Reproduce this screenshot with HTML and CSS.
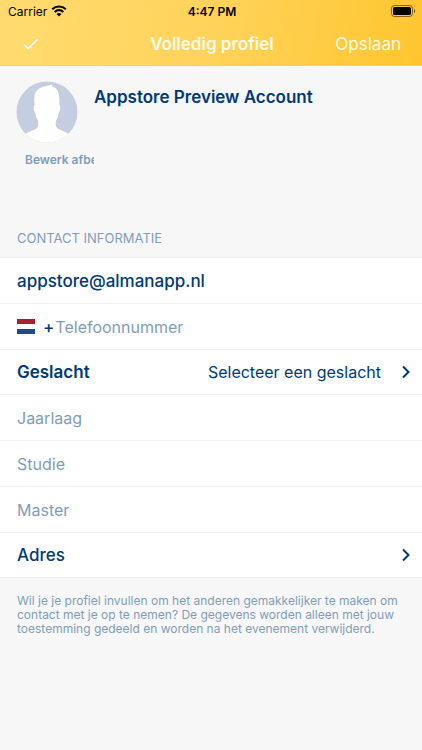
FILE: index.html
```html
<!DOCTYPE html>
<html lang="nl">
<head>
<meta charset="utf-8">
<meta name="viewport" content="width=device-width, initial-scale=1">
<title>Volledig profiel</title>
<link rel="stylesheet" href="styles.css">
</head>
<body>
<header class="top">
  <div class="status">
    <div class="carrier">
      <span>Carrier</span>
      <svg class="wifi" viewBox="0 0 16 12" aria-hidden="true"><path d="M1.2 4.3a9.8 9.8 0 0 1 13.6 0M3.7 6.9a6.2 6.2 0 0 1 8.6 0" fill="none" stroke="#000" stroke-width="2.1"/><path d="M8 11.6 5.5 9.1a3.6 3.6 0 0 1 5 0z"/></svg>
    </div>
    <time class="clock">4:47 PM</time>
    <svg class="battery" viewBox="0 0 25 12" aria-hidden="true"><rect x=".5" y=".5" width="21" height="11" rx="3" fill="none" stroke="#000" stroke-opacity=".5"/><rect x="2" y="2" width="18" height="8" rx="1.6"/><path d="M23 4v4c1.600-.6 1.600-3.400 0-4z" opacity=".6"/></svg>
  </div>
  <nav class="bar">
    <button class="confirm" type="button" aria-label="Bevestigen">
      <svg viewBox="0 0 16 12" aria-hidden="true"><path d="M1 6.600 5.200 10.600 14.800 1.200" fill="none" stroke="#fff" stroke-width="1.700"/></svg>
    </button>
    <h1>Volledig profiel</h1>
    <button class="save" type="submit" form="profile">Opslaan</button>
  </nav>
</header>
<main>
  <section class="person">
    <div class="photo">
      <svg class="avatar" viewBox="0 0 62 62" aria-hidden="true">
        <defs><clipPath id="disc"><circle cx="31" cy="31" r="30.500"/></clipPath></defs>
        <g clip-path="url(#disc)">
          <rect width="62" height="62" fill="#c6cde0"/>
          <path d="M9 53C15 49 21 49 22 45C22.400 43 22.300 41 22 39.500C20.500 37.500 19.800 35 19.400 32C18 31 17.300 27 18 24.500L18.700 24C18 17 18 11 22.500 8C26.500 5 32 5 36 3.400C35.600 4.600 36 5.300 37 5.800C42.500 8 44 14 43.300 24L44 24.500C44.700 27 44 31 42.600 32C42.200 35 41.500 37.500 40 39.500C39.700 41 39.600 43 40 45C41 49 47 49 53 53L62 62H0Z" fill="#fff"/>
        </g>
      </svg>
      <button class="edit" type="button">Bewerk afbeelding</button>
    </div>
    <h2>Appstore Preview Account</h2>
  </section>
  <form id="profile">
    <h3>CONTACT INFORMATIE</h3>
    <div class="rows">
      <div class="row"><input class="email" type="email" value="appstore@almanapp.nl" aria-label="E-mail"></div>
      <div class="row">
        <svg class="flag" viewBox="0 0 18 15" aria-hidden="true"><rect width="18" height="15" fill="#fff"/><rect width="18" height="5" fill="#a9202f"/><rect y="10" width="18" height="5" fill="#24468e"/></svg>
        <label class="plus" for="phone">+</label>
        <input id="phone" type="tel" placeholder="Telefoonnummer">
      </div>
      <button class="row link" type="button">
        <span class="name strong">Geslacht</span>
        <span class="choice">Selecteer een geslacht</span>
        <svg class="chevron" viewBox="0 0 8 14" aria-hidden="true"><path d="M1 1.500 6.500 7 1 12.500" fill="none" stroke="#003a75" stroke-width="2"/></svg>
      </button>
      <div class="row"><input type="text" placeholder="Jaarlaag" aria-label="Jaarlaag"></div>
      <div class="row"><input type="text" placeholder="Studie" aria-label="Studie"></div>
      <div class="row"><input type="text" placeholder="Master" aria-label="Master"></div>
      <button class="row link" type="button">
        <span class="name">Adres</span>
        <svg class="chevron" viewBox="0 0 8 14" aria-hidden="true"><path d="M1 1.500 6.500 7 1 12.500" fill="none" stroke="#003a75" stroke-width="2"/></svg>
      </button>
    </div>
    <p class="note">Wil je je profiel invullen om het anderen gemakkelijker te maken om contact met je op te nemen? De gegevens worden alleen met jouw toestemming gedeeld en worden na het evenement verwijderd.</p>
  </form>
</main>
</body>
</html>
```
FILE: styles.css
```css
* { box-sizing: border-box; }
body {
  margin: 0;
  min-height: 100vh;
  background: #f7f7f7;
  color: #003a75;
  font-family: Inter, "Liberation Sans", sans-serif;
  font-size: 17px;
}
h1, h2, h3, p { margin: 0; }
button, input {
  margin: 0;
  padding: 0;
  border: 0;
  background: none;
  color: inherit;
  font: inherit;
}
svg { display: block; flex: none; }
.top {
  height: 66px;
  background: linear-gradient(100deg, #ffdb70, #ffd35a 50%, #fec52e);
  border-bottom: 1px solid #e3cf98;
}
.status {
  display: grid;
  grid-template-columns: 1fr auto 1fr;
  align-items: center;
  height: 22px;
  padding: 0 6px 0 8px;
  color: #000;
  font-size: 12px;
}
.carrier { display: flex; align-items: center; gap: 4px; }
.wifi { width: 16px; height: 12px; }
.clock { font-weight: 600; }
.battery { justify-self: end; width: 25px; height: 12px; }
.bar {
  display: grid;
  grid-template-columns: 1fr auto 1fr;
  align-items: center;
  height: 43px;
  padding: 0 21px 0 23px;
  color: #fffbe8;
}
.bar h1 { font-size: 17px; font-weight: 600; }
.confirm { justify-self: start; }
.confirm svg { width: 16px; height: 12px; }
.save { justify-self: end; }
.person {
  display: flex;
  gap: 16px;
  height: 154px;
  padding: 15px 16px 0;
}
.photo { width: 62px; }
.avatar { width: 62px; height: 62px; }
.edit {
  display: block;
  width: 69px;
  margin: 8px 0 0 9px;
  overflow: hidden;
  color: #7f9dba;
  font-size: 12px;
  font-weight: 600;
  line-height: 18px;
  text-align: left;
  white-space: nowrap;
}
.person h2 { font-size: 17px; font-weight: 600; line-height: 32px; }
h3 {
  padding: 10px 17px;
  color: #7f9dba;
  font-size: 13px;
  font-weight: 400;
  line-height: 17px;
}
.rows { background: #fff; border-bottom: 1px solid #efefef; }
.row {
  display: flex;
  align-items: center;
  width: 100%;
  height: 46px;
  padding: 0 17px;
  border-top: 1px solid #efefef;
}
.row input { flex: 1; min-width: 0; height: 100%; font-size: 16px; outline: 0; }
input::placeholder { color: #7f9dba; opacity: 1; }
.row .email { font-size: 17px; font-weight: 500; }
.flag { width: 18px; height: 15px; }
.plus { padding: 0 1px 0 8px; font-weight: 500; }
.link { height: 45px; padding-right: 12px; text-align: left; }
.name { flex: 1; font-weight: 500; }
.strong { font-weight: 600; }
.choice { font-size: 16px; }
.chevron { width: 8px; height: 14px; margin-left: 21px; }
.note {
  padding: 16px 17px;
  color: #7f9dba;
  font-size: 12px;
  line-height: 14px;
}
```
